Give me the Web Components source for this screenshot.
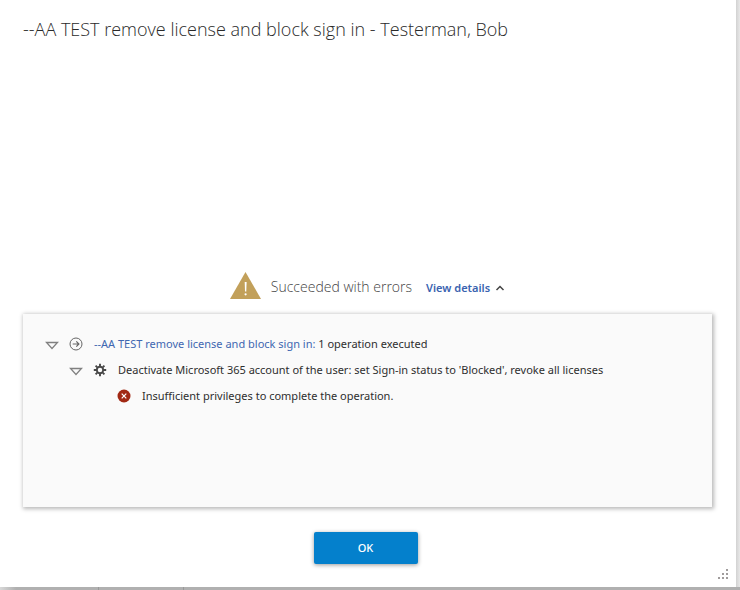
<!DOCTYPE html>
<html lang="en">
<head>
<meta charset="utf-8">
<title>Operation results</title>
<style>
  html, body { height: 100%; }
  body { margin: 0; background: #fff; color: #2e2e2e; font: 11px/16px "Noto Sans", "Open Sans", sans-serif; }
</style>
</head>
<body>
<result-dialog>
  <span slot="title">--AA TEST remove license and block sign in - Testerman, Bob</span>
  <status-bar>Succeeded with errors</status-bar>
  <details-panel>
    <op-row level="0" icon="arrow" expandable><a href="#operation">--AA TEST remove license and block sign in:</a> 1 operation executed</op-row>
    <op-row level="1" icon="gear" expandable>Deactivate Microsoft 365 account of the user: set Sign-in status to 'Blocked', revoke all licenses</op-row>
    <op-row level="2" icon="error">Insufficient privileges to complete the operation.</op-row>
  </details-panel>
  <primary-button slot="footer">OK</primary-button>
</result-dialog>
<script>
const attach = (host, html) => {
  const t = document.createElement('template');
  t.innerHTML = html;
  host.attachShadow({ mode: 'open' }).append(t.content.cloneNode(true));
};

customElements.define('result-dialog', class extends HTMLElement {
  constructor() {
    super();
    attach(this, `
      <style>
        :host { display: grid; grid-template: minmax(0, 1fr) 3px / minmax(0, 1fr) 4px; box-sizing: border-box; min-height: 100vh; }
        .dialog { display: flex; flex-direction: column; box-sizing: border-box; padding: 16px 24px 23px 23px; background: #fff; position: relative; }
        h1 { margin: 0; font: 350 18px/26px "Open Sans", "Noto Sans", sans-serif; color: #2a2a2a; }
        .body { flex: 1; display: flex; flex-direction: column; justify-content: flex-end; }
        .footer { display: flex; justify-content: center; padding: 25px 4px 0 0; }
        .right { background: linear-gradient(90deg, #d2d2d2, #e8e8e8); }
        .bottom { grid-column: 1 / -1; display: grid; grid-template-columns: 99px 85px 1fr; background: linear-gradient(90deg, #d8d8d8, #b0b0b0 16px); }
        .bottom i { border-right: 1px solid #999; }
        .bottom i:last-child { border: 0; }
        .grip { position: absolute; right: 8px; bottom: 8px; width: 11px; height: 11px; }
      </style>
      <section class="dialog" role="dialog" aria-labelledby="t">
        <h1 id="t"><slot name="title"></slot></h1>
        <div class="body"><slot></slot></div>
        <div class="footer"><slot name="footer"></slot></div>
        <svg class="grip" viewBox="0 0 11 11" fill="#a09c9c" aria-hidden="true" shape-rendering="crispEdges"><path d="M9 1h2v2h-2zM5 5h2v2h-2zM9 5h2v2h-2zM1 9h2v2h-2zM5 9h2v2h-2zM9 9h2v2h-2z"/></svg>
      </section>
      <div class="right"></div>
      <div class="bottom"><i></i><i></i><i></i></div>`);
  }
});

customElements.define('status-bar', class extends HTMLElement {
  constructor() {
    super();
    attach(this, `
      <style>
        :host { display: flex; justify-content: center; align-items: center; gap: 10px; height: 28px; margin-bottom: 14px; }
        .warn { width: 31px; height: 28px; flex: none; }
        .msg { padding-top: 2px; font: 350 14px/20px "Open Sans", "Noto Sans", sans-serif; color: #444; }
        button { display: flex; align-items: center; gap: 5px; margin-left: 4px; padding: 4px 0 0; border: 0; background: none; color: #3a63b0; font: 600 11px/16px "Noto Sans", "Open Sans", sans-serif; cursor: pointer; }
        button svg { width: 10px; height: 8px; }
      </style>
      <svg class="warn" viewBox="0 0 31 28" aria-hidden="true"><path d="M15.500 0L31 27H0z" fill="#c2a05a"/><path d="M14.700 10h1.900l-.3 9.500h-1.300z" fill="#fff"/><circle cx="15.600" cy="22.300" r="1.100" fill="#fff"/></svg>
      <span class="msg"><slot></slot></span>
      <button type="button" aria-expanded="true">View details<svg viewBox="0 0 10 8" fill="none" stroke="#444" stroke-width="1.500" aria-hidden="true"><path d="M1.500 6L5 2.500 8.500 6"/></svg></button>`);
  }
});

customElements.define('details-panel', class extends HTMLElement {
  constructor() {
    super();
    attach(this, `
      <style>
        :host { display: flex; flex-direction: column; gap: 10px; box-sizing: border-box; min-height: 193px; padding: 22px 17px; background: #fafafa; box-shadow: 1px 1px 4px 1px rgba(0,0,0,.28); }
      </style>
      <slot></slot>`);
  }
});

const ICONS = {
  arrow: '<svg viewBox="0 0 14 14" fill="none" stroke="#666"><circle cx="7" cy="7" r="6"/><path d="M3.700 7h6M7.300 4.400L9.900 7 7.300 9.600" stroke-width="1.200"/></svg>',
  gear: '<svg viewBox="0 0 14 14" fill="none" stroke="#484848"><circle cx="7" cy="7" r="3.200" stroke-width="1.900"/><path d="M7 .8v2.400M7 10.800v2.400M.8 7h2.400M10.800 7h2.400M2.600 2.600l1.700 1.700M9.700 9.700l1.700 1.700M2.600 11.400l1.700-1.700M9.700 4.300l1.700-1.700" stroke-width="1.900"/></svg>',
  error: '<svg viewBox="0 0 14 14"><circle cx="7" cy="7" r="6.500" fill="#a12813"/><path d="M4.700 4.700l4.600 4.600M9.300 4.700L4.700 9.300" stroke="#fff" stroke-width="1.200"/></svg>'
};

customElements.define('op-row', class extends HTMLElement {
  connectedCallback() {
    if (this.shadowRoot) return;
    const toggle = this.hasAttribute('expandable')
      ? '<button type="button" aria-label="Collapse" aria-expanded="true"><svg viewBox="0 0 14 14" fill="none" stroke="#808080" stroke-width="1.300"><path d="M1.500 5.500h11L7 11.500z"/></svg></button>'
      : '';
    attach(this, `
      <style>
        :host { display: grid; grid-template-columns: 24px 24px minmax(0, 1fr); align-items: center; min-height: 16px; padding-left: ${this.getAttribute('level') * 24}px; }
        .cell { display: flex; justify-content: center; }
        button { display: flex; padding: 0; border: 0; background: none; cursor: pointer; }
        svg { width: 14px; height: 14px; }
        .text { padding-left: 6px; }
        ::slotted(a) { color: #3f67b1; text-decoration: none; }
      </style>
      <span class="cell">${toggle}</span>
      <span class="cell" aria-hidden="true">${ICONS[this.getAttribute('icon')]}</span>
      <span class="text"><slot></slot></span>`);
  }
});

customElements.define('primary-button', class extends HTMLElement {
  constructor() {
    super();
    attach(this, `
      <style>
        :host { display: block; }
        button { min-width: 104px; padding: 8px 16px; border: 0; border-radius: 2px; background: #0480cc; color: #fff; font: 500 11px/16px "Noto Sans", "Open Sans", sans-serif; box-shadow: 0 1px 4px rgba(0,0,0,.4); cursor: pointer; }
      </style>
      <button type="button"><slot></slot></button>`);
  }
});
</script>
</body>
</html>
